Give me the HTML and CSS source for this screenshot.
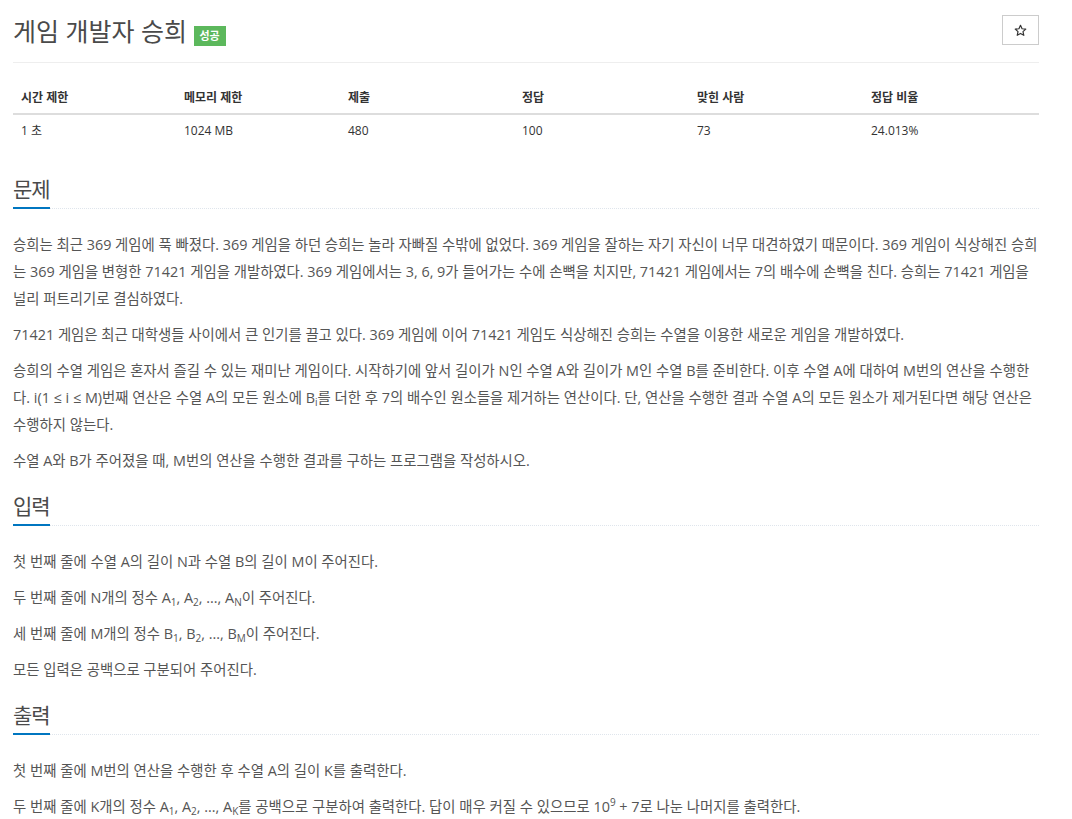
FILE: index.html
```html
<!DOCTYPE html>
<html lang="ko">
<head>
    <meta charset="UTF-8">
    <meta name="viewport" content="width=device-width, initial-scale=1.0">
    <title>게임 개발자 승희</title>
    <link rel="stylesheet" href="styles.css">
</head>
<body>
    <div class="container">
        <div class="page-header">
            <h1>
                <span class="problem-title">게임 개발자 승희</span>
                <span class="label-success">성공</span>
            </h1>
            <button class="star-button" title="즐겨찾기">
                <svg width="13" height="13" viewBox="0 0 24 24">
                    <path d="M12 2.5l2.9 6.3 6.8.7-5.1 4.6 1.5 6.8L12 17.4l-6.1 3.5 1.5-6.8-5.1-4.6 6.8-.7z" fill="none" stroke="#333" stroke-width="2.2" stroke-linejoin="round"/>
                </svg>
            </button>
        </div>

        <table class="problem-info">
            <colgroup>
                <col style="width: 163px">
                <col style="width: 164px">
                <col style="width: 174px">
                <col style="width: 175px">
                <col style="width: 174px">
                <col>
            </colgroup>
            <thead>
                <tr>
                    <th>시간 제한</th>
                    <th>메모리 제한</th>
                    <th>제출</th>
                    <th>정답</th>
                    <th>맞힌 사람</th>
                    <th>정답 비율</th>
                </tr>
            </thead>
            <tbody>
                <tr>
                    <td>1 초</td>
                    <td>1024 MB</td>
                    <td>480</td>
                    <td>100</td>
                    <td>73</td>
                    <td>24.013%</td>
                </tr>
            </tbody>
        </table>

        <section class="problem-section">
            <div class="headline"><h2>문제</h2></div>
            <div class="problem-text">
                <p>승희는 최근 369 게임에 푹 빠졌다. 369 게임을 하던 승희는 놀라 자빠질 수밖에 없었다. 369 게임을 잘하는 자기 자신이 너무 대견하였기 때문이다. 369 게임이 식상해진 승희는 369 게임을 변형한 71421 게임을 개발하였다. 369 게임에서는 3, 6, 9가 들어가는 수에 손뼉을 치지만, 71421 게임에서는 7의 배수에 손뼉을 친다. 승희는 71421 게임을 널리 퍼트리기로 결심하였다.</p>
                <p>71421 게임은 최근 대학생들 사이에서 큰 인기를 끌고 있다. 369 게임에 이어 71421 게임도 식상해진 승희는 수열을 이용한 새로운 게임을 개발하였다.</p>
                <p>승희의 수열 게임은 혼자서 즐길 수 있는 재미난 게임이다. 시작하기에 앞서 길이가 N인 수열 A와 길이가 M인 수열 B를 준비한다. 이후 수열 A에 대하여 M번의 연산을 수행한다. i(1 ≤ i ≤ M)번째 연산은 수열 A의 모든 원소에 B<sub>i</sub>를 더한 후 7의 배수인 원소들을 제거하는 연산이다. 단, 연산을 수행한 결과 수열 A의 모든 원소가 제거된다면 해당 연산은 수행하지 않는다.</p>
                <p>수열 A와 B가 주어졌을 때, M번의 연산을 수행한 결과를 구하는 프로그램을 작성하시오.</p>
            </div>
        </section>

        <section class="problem-section">
            <div class="headline"><h2>입력</h2></div>
            <div class="problem-text">
                <p>첫 번째 줄에 수열 A의 길이 N과 수열 B의 길이 M이 주어진다.</p>
                <p>두 번째 줄에 N개의 정수 A<sub>1</sub>, A<sub>2</sub>, ..., A<sub>N</sub>이 주어진다.</p>
                <p>세 번째 줄에 M개의 정수 B<sub>1</sub>, B<sub>2</sub>, ..., B<sub>M</sub>이 주어진다.</p>
                <p>모든 입력은 공백으로 구분되어 주어진다.</p>
            </div>
        </section>

        <section class="problem-section">
            <div class="headline"><h2>출력</h2></div>
            <div class="problem-text">
                <p>첫 번째 줄에 M번의 연산을 수행한 후 수열 A의 길이 K를 출력한다.</p>
                <p>두 번째 줄에 K개의 정수 A<sub>1</sub>, A<sub>2</sub>, ..., A<sub>K</sub>를 공백으로 구분하여 출력한다. 답이 매우 커질 수 있으므로 10<sup>9</sup> + 7로 나눈 나머지를 출력한다.</p>
            </div>
        </section>
    </div>
</body>
</html>
```

FILE: styles.css
```css
body {
    margin: 0;
    font-family: "Open Sans", "Noto Sans CJK KR", sans-serif;
    color: #555;
    background-color: #ffffff;
}

.container {
    width: 1026px;
    margin-left: 13px;
}

.page-header {
    display: flex;
    justify-content: space-between;
    align-items: flex-start;
    padding: 14px 0 14px;
    border-bottom: 1px solid #eee;
}

.page-header h1 {
    margin: 0;
    font-size: 25px;
    line-height: 34px;
    font-weight: 400;
    color: #4a4a4a;
}

.label-success {
    display: inline-block;
    vertical-align: 1px;
    padding: 0 6px;
    height: 20px;
    line-height: 20px;
    background-color: #5cb85c;
    color: #ffffff;
    font-size: 11px;
    font-weight: 600;
}

.star-button {
    margin-top: 1px;
    width: 37px;
    height: 30px;
    padding: 0;
    background-color: #ffffff;
    border: 1px solid #ccc;
    display: flex;
    align-items: center;
    justify-content: center;
    cursor: pointer;
}

.problem-info {
    width: 100%;
    table-layout: fixed;
    border-collapse: collapse;
    margin-top: 19px;
    margin-bottom: 30px;
    font-size: 12px;
    color: #333;
}

.problem-info th {
    text-align: left;
    font-weight: 700;
    padding: 8px 8px 7px;
    line-height: 16px;
    border-bottom: 2px solid #ddd;
}

.problem-info td {
    padding: 8px;
    line-height: 16px;
}

.problem-section {
    margin-top: 20px;
}

.headline {
    border-bottom: 1px dotted #dfe5ec;
    margin-bottom: 22px;
}

.headline h2 {
    display: inline-block;
    margin: 0 0 -1px;
    padding: 0 0 6px;
    font-size: 21px;
    line-height: 24px;
    font-weight: 400;
    letter-spacing: -1px;
    color: #4a4a4a;
    border-bottom: 2px solid #0076c0;
}

.problem-text {
    font-size: 14.4px;
    line-height: 27px;
}

.problem-text p {
    margin: 0 0 9px;
}

.problem-text sub,
.problem-text sup {
    font-size: 10px;
    line-height: 0;
    position: relative;
    vertical-align: baseline;
}

.problem-text sub {
    top: 3px;
}

.problem-text sup {
    top: -6px;
}
```
